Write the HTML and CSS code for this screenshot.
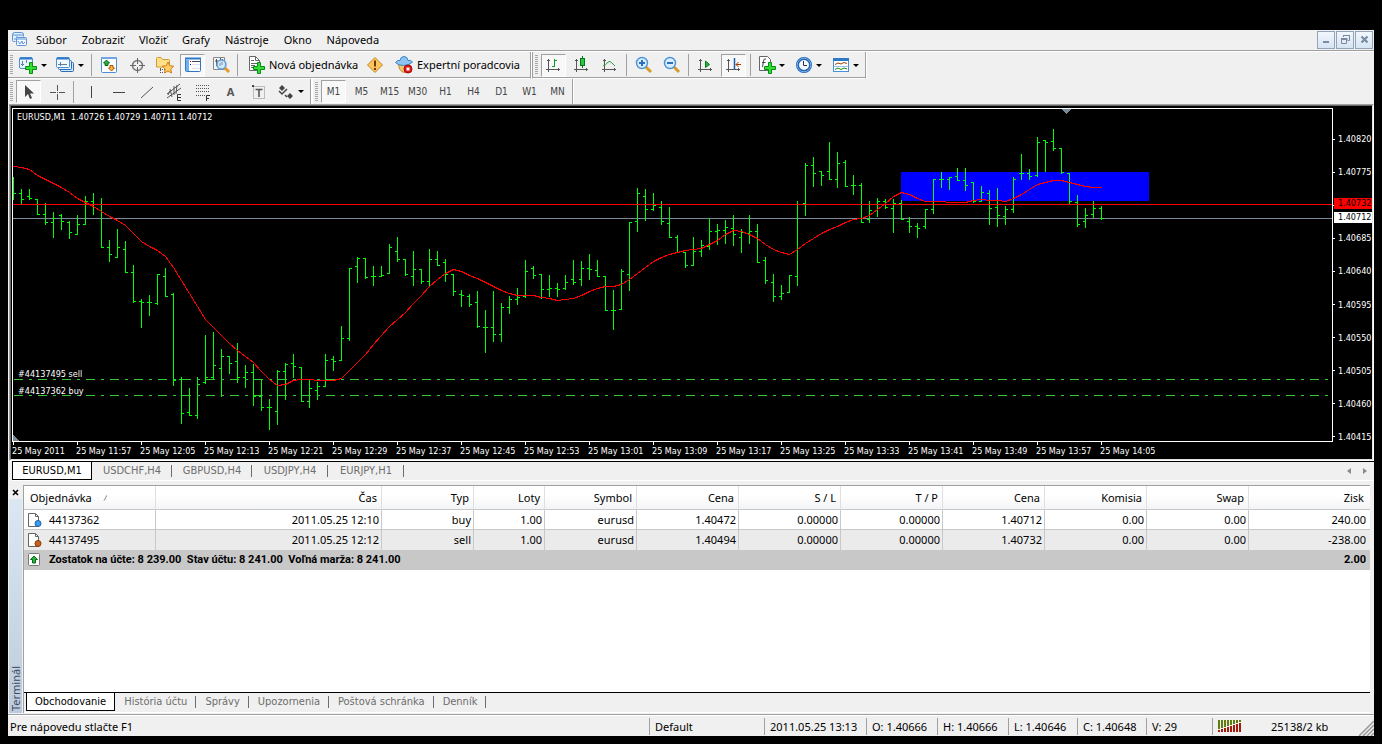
FILE: index.html
```html
<!DOCTYPE html>
<html lang="sk">
<head>
<meta charset="utf-8">
<title>EURUSD,M1</title>
<link rel="stylesheet" href="styles.css">
</head>
<body>
<div class="app">
  <header class="menubar">
    <svg class="app-icon" width="16" height="16" viewBox="0 0 16 16" fill="none" stroke="#5b93d6"><path d="M3.5 9.500h-2a1 1 0 0 1-1-1v-6a2 2 0 0 1 2-2h7a2 2 0 0 1 2 2v2" fill="#e4effb"/><path d="M1 3h10M3 6v2M5 4v3M7 5v1" /><rect x="4.500" y="5.500" width="10" height="8" rx="1" fill="#f4f9ff"/><path d="M5 7h9M6 9l2 3 2-3 1 3 2-2"/></svg>
    <nav class="menu">
      <button>Súbor</button><button>Zobraziť</button><button>Vložiť</button><button>Grafy</button><button>Nástroje</button><button>Okno</button><button>Nápoveda</button>
    </nav>
    <div class="window-buttons">
      <button aria-label="Minimalizovať"><svg width="15" height="15" viewBox="0 0 15 15"><path d="M4 9h6v2H4z" fill="#7a8ba0"/></svg></button>
      <button aria-label="Obnoviť"><svg width="15" height="15" viewBox="0 0 15 15" fill="none" stroke="#7a8ba0"><path d="M5 3.500h6.500M5.500 3v2M11.500 3v5.500H9.500"/><path d="M3 6.500h6.500M3 7.500h6.500M3.500 6v5.500h5V6"/></svg></button>
      <button aria-label="Zavrieť"><svg width="15" height="15" viewBox="0 0 15 15"><path d="M4.500 4.500l6 6M10.500 4.500l-6 6" stroke="#7a8ba0" stroke-width="2.200"/></svg></button>
    </div>
  </header>

  <div class="toolbar-row">
    <div class="toolbar">
      <span class="grip"></span>
      <button class="tool split" aria-label="Nový graf"><svg width="20" height="20" viewBox="0 0 20 20"><rect x="1.500" y="2.500" width="13" height="11" rx="1.500" fill="#eaf4ff" stroke="#4a8fd6"/><path d="M2 3.500h12" stroke="#2f7ac6" stroke-width="2"/><path d="M4.500 6v5M3 9.500h3M8.500 5v3" stroke="#5b7fa8"/><path d="M11.500 7.500h3v4h4v3h-4v4h-3v-4h-4v-3h4z" fill="#2fe02f" stroke="#0a8a1a"/></svg><span class="caret"></span></button>
      <button class="tool split" aria-label="Profily"><svg width="20" height="20" viewBox="0 0 20 20"><rect x="5.500" y="7.500" width="13" height="9" rx="1" fill="#d4e6f8" stroke="#2a6db5"/><rect x="3.500" y="5.500" width="13" height="9" rx="1" fill="#e4f0fb" stroke="#2a6db5"/><rect x="1.500" y="2.500" width="13" height="10" rx="1" fill="#f4f9ff" stroke="#4a8fd6"/><path d="M2 3.500h12" stroke="#2f7ac6" stroke-width="2"/><path d="M3 9.500h9M5.500 7v4" stroke="#5b7fa8"/></svg><span class="caret"></span></button>
      <span class="sep"></span>
      <button class="tool" aria-label="Trhový prehľad"><svg width="20" height="20" viewBox="0 0 20 20"><rect x="2.500" y="2.500" width="15" height="15" rx="1" fill="#fbfdff" stroke="#4a8fd6"/><path d="M2 3h16" stroke="#6fa8e0" stroke-width="2"/><path d="M7.500 5l3 3h-1.500v2.500h-3V8H4.500z" fill="#25b53c" stroke="#0a6b1a"/><path d="M12.500 16l-3-3H11v-2.500h3V13h1.500z" fill="#ffb44a" stroke="#b05a00"/></svg></button>
      <button class="tool" aria-label="Dátové okno"><svg width="20" height="20" viewBox="0 0 20 20" fill="none" stroke="#666"><circle cx="10.500" cy="10.500" r="5" stroke="#777" stroke-width="1.500"/><path d="M10.500 3v6M10.500 12v6M3 10.500h6M12 10.500h6"/></svg></button>
      <button class="tool" aria-label="Navigátor"><svg width="20" height="20" viewBox="0 0 20 20"><path d="M1.500 12V3.500q0-1 1-1H6l1.500 2h6q1 0 1 1V12z" fill="#ffe08a" stroke="#d19a2e"/><path d="M5.500 13v5M5 14.500h5M5 17.500h4" stroke="#555" stroke-dasharray="1 1"/><path d="M13 7l1.700 3.700 4 .5-2.900 2.800.7 4-3.500-2-3.500 2 .7-4-2.900-2.800 4-.5z" fill="#ffcf66" stroke="#cf7d1a"/></svg></button>
      <button class="tool pressed" aria-label="Terminál"><svg width="20" height="20" viewBox="0 0 20 20"><rect x="2.500" y="3.500" width="15" height="13" rx="1" fill="#fff" stroke="#2a78c8"/><path d="M2 3.500h16" stroke="#2a78c8" stroke-width="2"/><path d="M3 5h3v11H3z" fill="#6fb0f0"/><path d="M9 6.500h8" stroke="#445"/><path d="M9 9.500h8M9 13.500h8" stroke="#dde"/><path d="M7 6h1v1H7z" fill="#e00"/><path d="M7 9h1v1H7z" fill="#00c"/></svg></button>
      <button class="tool" aria-label="Tester stratégií"><svg width="20" height="20" viewBox="0 0 20 20"><path d="M2.500 2.500h11v12h-11z" fill="#f4f4f4" stroke="#888"/><path d="M5.500 4v7M4 6h3M9.500 3v4M11.500 4v3" stroke="#555"/><circle cx="10.500" cy="9.500" r="4.500" fill="#cfe6fa" stroke="#5f9fd8" stroke-width="1.500" fill-opacity=".85"/><path d="M9 11V8M11 10V7" stroke="#6b8dad"/><path d="M14 13l4 4" stroke="#e39a2b" stroke-width="3"/></svg></button>
      <span class="sep"></span>
      <button class="tool labelled order"><svg width="20" height="20" viewBox="0 0 20 20"><path d="M3.500 1.500h6l4 4v10h-10z" fill="#fff" stroke="#666"/><path d="M9.500 1.500v4h4M5 5.500h3M5 8.500h6M5 10.500h4M5 12.500h4" fill="none" stroke="#666"/><path d="M11.500 7.500h3v4h4v3h-4v4h-3v-4h-4v-3h4z" fill="#2fe02f" stroke="#0a8a1a"/></svg>Nová objednávka</button>
      <button class="tool" aria-label="MetaEditor"><svg width="20" height="20" viewBox="0 0 20 20"><path d="M10 2.500l7.500 7.500-7.500 7.500L2.500 10z" fill="#ffc45e" stroke="#c8842a" stroke-linejoin="round"/><path d="M10 5.500v6M10 13v2" stroke="#6a3c00" stroke-width="2"/></svg></button>
      <button class="tool labelled expert"><svg width="20" height="20" viewBox="0 0 20 20"><path d="M4.500 8q0 8 5.500 9.500 5.500-1.500 5.500-9.500z" fill="#f5c46a" stroke="#c8842a"/><path d="M1.500 7.500q2-3 4.500-2 .5-4 4-4t4 4q2.500-1 4.500 1.500-3.500 3.500-9 3.500T1.500 7.500z" fill="#8cc3f2" stroke="#3b83c4"/><circle cx="14" cy="14" r="4" fill="#e01818" stroke="#a40c0c"/><rect x="12.500" y="12.500" width="3" height="3" fill="#fff"/></svg>Expertní poradcovia</button>
    </div>
    <div class="toolbar second">
      <span class="grip"></span>
      <button class="tool pressed" aria-label="Stĺpcový graf"><svg width="20" height="20" viewBox="0 0 20 20"><path d="M4.500 17V4M3 5.500h3M2 14.500h14M14.500 13v3" stroke="#555" fill="none"/><path d="M10.500 4v8M8 11.500h3M11 5.500h2" stroke="#0a9a2a"/></svg></button>
      <button class="tool" aria-label="Sviečkový graf"><svg width="20" height="20" viewBox="0 0 20 20"><path d="M4.500 17V4M3 5.500h3M2 14.500h14M14.500 13v3" stroke="#555" fill="none"/><path d="M10.500 1v12" stroke="#067a1a"/><rect x="8.500" y="3.500" width="4" height="7" fill="#29c840" stroke="#067a1a"/></svg></button>
      <button class="tool" aria-label="Čiarový graf"><svg width="20" height="20" viewBox="0 0 20 20"><path d="M4.500 17V4M3 5.500h3M2 14.500h14M14.500 13v3" stroke="#555" fill="none"/><path d="M3 11q3-1 5-4 2-1.500 4 1l3 3" stroke="#28a544" fill="none"/></svg></button>
      <span class="sep"></span>
      <button class="tool" aria-label="Priblížiť"><svg width="20" height="20" viewBox="0 0 20 20"><path d="M12 12l5 5" stroke="#d89a2b" stroke-width="3"/><circle cx="8" cy="8" r="5.500" fill="#d8edff" stroke="#4a92d4" stroke-width="1.400"/><path d="M5 8h6M8 5v6" stroke="#2a6fb8" stroke-width="2"/></svg></button>
      <button class="tool" aria-label="Oddialiť"><svg width="20" height="20" viewBox="0 0 20 20"><path d="M12 12l5 5" stroke="#d89a2b" stroke-width="3"/><circle cx="8" cy="8" r="5.500" fill="#d8edff" stroke="#4a92d4" stroke-width="1.400"/><path d="M5 8h6" stroke="#2a6fb8" stroke-width="2"/></svg></button>
      <span class="sep"></span>
      <button class="tool" aria-label="Automatický posun"><svg width="20" height="20" viewBox="0 0 20 20"><path d="M4.500 17V4M3 5.500h3M2 14.500h14M14.500 13v3" stroke="#555" fill="none"/><path d="M9.500 6l4 3.500-4 3z" fill="#25b53c" stroke="#067a1a"/></svg></button>
      <button class="tool pressed" aria-label="Posun grafu"><svg width="20" height="20" viewBox="0 0 20 20"><path d="M4.500 17V4M3 5.500h3M2 14.500h14M14.500 13v3" stroke="#555" fill="none"/><path d="M10.500 3v11" stroke="#1c5fae" stroke-width="1.500"/><path d="M17 9.500h-5M14.500 7l-2.500 2.500 2.500 2.500" stroke="#a04000" fill="none"/></svg></button>
      <span class="sep"></span>
      <button class="tool split" aria-label="Indikátory"><svg width="20" height="20" viewBox="0 0 20 20"><path d="M2.500 1.500h8l3 3v11h-11z" fill="#fff" stroke="#666"/><path d="M9 4q-2-1-2.500 2L5.500 12M5 7.500h3.500" stroke="#444" fill="none"/><path d="M11.500 7.500h3v4h4v3h-4v4h-3v-4h-4v-3h4z" fill="#2fe02f" stroke="#0a8a1a"/></svg><span class="caret"></span></button>
      <button class="tool split" aria-label="Periódy"><svg width="20" height="20" viewBox="0 0 20 20"><circle cx="10" cy="10" r="6.500" fill="#f4f9ff" stroke="#1f62b4" stroke-width="3"/><circle cx="10" cy="10" r="6.800" fill="none" stroke="#7db5ec"/><path d="M9.500 6v4.500H13" stroke="#333" fill="none"/></svg><span class="caret"></span></button>
      <button class="tool split" aria-label="Šablóny"><svg width="20" height="20" viewBox="0 0 20 20"><rect x="2.500" y="3.500" width="15" height="13" fill="#fff" stroke="#4a8fd6"/><path d="M2 4.500h16" stroke="#2f7ac6" stroke-width="3"/><path d="M4 9.500l3-1.500 3 1 3-1.500 3 1" stroke="#a04000" fill="none"/><path d="M3 11.500h14" stroke="#9bc1e6"/><path d="M4 14.500l3-1.500 3 1.500 3-1.500 3 1" stroke="#0a8a1a" fill="none"/></svg><span class="caret"></span></button>
    </div>
  </div>

  <div class="toolbar-row lower">
    <div class="toolbar">
      <span class="grip"></span>
      <button class="tool pressed" aria-label="Kurzor"><svg width="20" height="20" viewBox="0 0 20 20"><path d="M6 3v12l3-3 2 5 2-1-2-4.500h4z" fill="#444"/></svg></button>
      <button class="tool" aria-label="Zameriavací kríž"><svg width="20" height="20" viewBox="0 0 20 20"><path d="M10.500 3v6M10.500 12v6M3 10.500h6M12 10.500h6M10 10.500h1" stroke="#555"/></svg></button>
      <span class="sep"></span>
      <button class="tool" aria-label="Vertikálna čiara"><svg width="20" height="20" viewBox="0 0 20 20"><path d="M10.500 4v12" stroke="#444"/></svg></button>
      <button class="tool" aria-label="Horizontálna čiara"><svg width="20" height="20" viewBox="0 0 20 20"><path d="M4 10.500h12" stroke="#444"/></svg></button>
      <button class="tool" aria-label="Trendová čiara"><svg width="20" height="20" viewBox="0 0 20 20"><path d="M4 16L16 5" stroke="#555"/></svg></button>
      <button class="tool" aria-label="Ekvidištančný kanál"><svg width="20" height="20" viewBox="0 0 20 20" fill="none" stroke="#555"><path d="M2 12L15 2M2 16L16 6M5 7l2 8M9 4v9M12 3l-1 9M3 13l2-4" /><path d="M16 12.500h-3.500v6H16M13 15.500h3" stroke="#333"/></svg></button>
      <button class="tool" aria-label="Fibonacci"><svg width="20" height="20" viewBox="0 0 20 20" fill="none" stroke="#555"><path d="M3 3.500h14M3 6.500h14M3 9.500h14M3 13.500h9" stroke-dasharray="1 1"/><path d="M17 13.500h-3.500V19M13 16.500h3" stroke="#333"/></svg></button>
      <button class="tool glyph" aria-label="Text">A</button>
      <button class="tool" aria-label="Textová značka"><svg width="20" height="20" viewBox="0 0 20 20" fill="none"><rect x="4.500" y="4.500" width="11" height="12" stroke="#888" stroke-dasharray="1 1"/><path d="M3 3h2v2H3z" fill="#444"/><path d="M6.500 7.500h7M10 7v8" stroke="#555" stroke-width="1.600"/></svg></button>
      <button class="tool split" aria-label="Šípky"><svg width="20" height="20" viewBox="0 0 20 20"><path d="M6 3l3 3-1.500 1.500L6 9 3 6zM14 11l3 3-3 3-3-3z" fill="#444"/><path d="M3 9l3 3 5-5M9 13l2 2" stroke="#444" fill="none" stroke-width="1.500"/></svg><span class="caret"></span></button>
    </div>
    <div class="toolbar periods">
      <span class="grip"></span>
      <button class="tool pressed">M1</button><button class="tool">M5</button><button class="tool">M15</button><button class="tool">M30</button><button class="tool">H1</button><button class="tool">H4</button><button class="tool">D1</button><button class="tool">W1</button><button class="tool">MN</button>
    </div>
  </div>

  <section class="chart-window">
    <div class="chart">
      <div class="plot">
        <svg id="plot" width="100%" height="100%" viewBox="13 109 1319 332" preserveAspectRatio="none" shape-rendering="crispEdges"></svg>
        <div class="chart-title">EURUSD,M1&nbsp; 1.40726 1.40729 1.40711 1.40712</div>
        <div class="order-label sell">#44137495 sell</div>
        <div class="order-label buy">#44137362 buy</div>
      </div>
      <div class="price-axis">
        <span>1.40820</span><span>1.40775</span><span></span><span>1.40685</span><span>1.40640</span><span>1.40595</span><span>1.40550</span><span>1.40505</span><span>1.40460</span><span>1.40415</span>
        <b class="tag ask">1.40732</b>
        <b class="tag bid">1.40712</b>
      </div>
      <div class="time-axis">
        <span>25 May 2011</span><span>25 May 11:57</span><span>25 May 12:05</span><span>25 May 12:13</span><span>25 May 12:21</span><span>25 May 12:29</span><span>25 May 12:37</span><span>25 May 12:45</span><span>25 May 12:53</span><span>25 May 13:01</span><span>25 May 13:09</span><span>25 May 13:17</span><span>25 May 13:25</span><span>25 May 13:33</span><span>25 May 13:41</span><span>25 May 13:49</span><span>25 May 13:57</span><span>25 May 14:05</span>
      </div>
    </div>
  </section>

  <nav class="tabs chart-tabs">
    <button class="active">EURUSD,M1</button><button>USDCHF,H4</button><button>GBPUSD,H4</button><button>USDJPY,H4</button><button>EURJPY,H1</button>
    <div class="tab-arrows">
      <button aria-label="Späť"><svg width="6" height="8" viewBox="0 0 6 8"><path d="M5 1v6L1 4z" fill="#888"/></svg></button>
      <button aria-label="Ďalej"><svg width="6" height="8" viewBox="0 0 6 8"><path d="M1 1v6l4-3z" fill="#888"/></svg></button>
    </div>
  </nav>

  <section class="terminal">
    <aside class="terminal-side">
      <button class="close" aria-label="Zavrieť terminál"><svg width="7" height="7" viewBox="0 0 7 7"><path d="M1 1l5 5M6 1L1 6" stroke="#000" stroke-width="1.600"/></svg></button>
      <div class="terminal-name"><span>Terminál</span></div>
    </aside>
    <div class="terminal-main">
      <div class="table-area">
        <table>
          <colgroup><col class="c-order"><col class="c-time"><col class="c-type"><col class="c-lots"><col class="c-type"><col class="c-num"><col class="c-num"><col class="c-num"><col class="c-num"><col class="c-num"><col class="c-num"><col></colgroup>
          <thead><tr><th>Objednávka <svg class="sort" width="8" height="8" viewBox="0 0 8 8"><path d="M1 7l3-6" stroke="#888"/><path d="M4 1l3 6H1" stroke="#fff" fill="none"/></svg></th><th>Čas</th><th>Typ</th><th>Loty</th><th>Symbol</th><th>Cena</th><th>S / L</th><th>T / P</th><th>Cena</th><th>Komisia</th><th>Swap</th><th>Zisk</th></tr></thead>
          <tbody>
            <tr><td><span class="order-cell"><svg width="16" height="16" viewBox="0 0 16 16"><path d="M1.500 1.500h7l3 3v10h-10z" fill="#fff" stroke="#666"/><path d="M8.500 1.500v3h3" fill="none" stroke="#666"/><circle cx="11" cy="11.500" r="3" fill="#3d9bee" stroke="#1a5fa8"/></svg>44137362</span></td><td>2011.05.25 12:10</td><td>buy</td><td>1.00</td><td>eurusd</td><td>1.40472</td><td>0.00000</td><td>0.00000</td><td>1.40712</td><td>0.00</td><td>0.00</td><td>240.00</td></tr>
            <tr><td><span class="order-cell"><svg width="16" height="16" viewBox="0 0 16 16"><path d="M1.500 1.500h7l3 3v10h-10z" fill="#fff" stroke="#666"/><path d="M8.500 1.500v3h3" fill="none" stroke="#666"/><circle cx="11" cy="11.500" r="3" fill="#c8641a" stroke="#84380a"/></svg>44137495</span></td><td>2011.05.25 12:12</td><td>sell</td><td>1.00</td><td>eurusd</td><td>1.40494</td><td>0.00000</td><td>0.00000</td><td>1.40732</td><td>0.00</td><td>0.00</td><td>-238.00</td></tr>
            <tr class="summary"><td colspan="11"><span class="order-cell"><svg width="16" height="16" viewBox="0 0 16 16"><rect x="1.500" y="1.500" width="11" height="12" rx="1" fill="#fff" stroke="#777"/><path d="M7 4l3.500 3.500h-2V11h-3V7.500h-2z" fill="#25b53c" stroke="#0a6b1a"/></svg>Zostatok na účte: 8 239.00&nbsp; Stav účtu: 8 241.00&nbsp; Voľná marža: 8 241.00</span></td><td>2.00</td></tr>
          </tbody>
        </table>
      </div>
      <nav class="tabs terminal-tabs">
        <button class="active">Obchodovanie</button><button>História účtu</button><button>Správy</button><button>Upozornenia</button><button>Poštová schránka</button><button>Denník</button>
      </nav>
    </div>
  </section>

  <footer class="status">
    <span class="help">Pre nápovedu stlačte F1</span><span class="profile">Default</span><span class="date">2011.05.25 13:13</span><span class="ohl">O: 1.40666</span><span class="ohl">H: 1.40666</span><span class="lc">L: 1.40646</span><span class="lc">C: 1.40648</span><span class="vol">V: 29</span>
    <span class="net"><svg width="23" height="13" viewBox="0 0 23 13" shape-rendering="crispEdges"><path d="M0 0h2v9h-2zM3 0h2v8h-2zM6 0h2v7h-2zM9 0h2v6h-2zM12 0h2v5h-2zM15 0h2v4h-2zM18 0h2v3h-2zM21 0h2v2h-2z" fill="#5e7f10"/><path d="M0 10h2v2h-2zM3 9h2v3h-2zM6 8h2v4h-2zM9 7h2v5h-2zM12 6h2v6h-2zM15 5h2v7h-2zM18 4h2v8h-2zM21 3h2v9h-2z" fill="#a41a0c"/></svg>25138/2 kb</span>
    <svg class="resize" width="16" height="16" viewBox="0 0 16 16"><path d="M1 16L16 1M5 16L16 5M9 16l7-7M13 16l3-3" stroke="#999" stroke-width="1.500"/></svg>
  </footer>
</div>
<script src="script.js"></script>
</body>
</html>
```
FILE: styles.css
```css
* { box-sizing: border-box; }

body {
  margin: 0;
  height: 100vh;
  padding: 30px 8px 8px;
  background: #000;
  color: #000;
  font: 11px/14px "Noto Sans", "Open Sans", sans-serif;
}

button {
  margin: 0;
  padding: 0;
  border: 0;
  background: none;
  color: inherit;
  font: inherit;
  white-space: nowrap;
}

svg { display: block; flex: none; }

.app {
  height: 100%;
  display: flex;
  flex-direction: column;
  background: #f0f0f0;
  overflow: hidden;
}

.menubar {
  display: flex;
  align-items: center;
  height: 22px;
  flex: none;
  padding: 0 0 2px 4px;
  border-bottom: 1px solid #fff;
  box-shadow: inset 0 -1px #a0a0a0;
}
.menu { display: flex; flex: 1; gap: 15px; padding-left: 8px; }
.window-buttons { display: flex; gap: 1px; padding-right: 1px; }
.window-buttons button {
  width: 18px;
  height: 18px;
  display: grid;
  place-items: center;
  border: 1px solid #93a3b8;
  background: linear-gradient(#f2f7fd, #d5e4f4);
}

.toolbar-row { display: flex; height: 27px; flex: none; }
.toolbar-row.lower { height: 25px; }
.toolbar {
  display: flex;
  align-items: center;
  gap: 3px;
  padding: 0 2px;
  border-right: 1px solid #a0a0a0;
  border-bottom: 1px solid #fff;
  box-shadow: inset 0 -1px #a0a0a0, 1px 0 #fff;
}
.lower .toolbar { border-bottom: 0; box-shadow: 1px 0 #fff; }
.second, .periods { margin-left: 1px; border-left: 1px solid #a0a0a0; }
.lower .periods { border-left-color: #fff; }
.grip {
  width: 3px;
  height: 20px;
  background: repeating-linear-gradient(#a8a8a8 0 1px, #f0f0f0 1px 2px);
}
.sep { width: 1px; height: 22px; margin: 0 1px; background: #a0a0a0; }
.tool {
  width: 25px;
  height: 23px;
  display: flex;
  align-items: center;
  justify-content: center;
  border: 1px solid transparent;
}
.tool.pressed {
  border-color: #a0a0a0 #fff #fff #a0a0a0;
  background: #f8f8f8;
}
.tool.split { width: 34px; justify-content: flex-start; gap: 3px; padding-left: 1px; }
.second .split, .lower .split { gap: 2px; }
.caret {
  border: 3px solid transparent;
  border-top-color: #000;
  border-bottom: 0;
}
.tool.labelled { justify-content: flex-start; gap: 3px; padding-left: 3px; }
.tool.order { width: 117px; }
.tool.expert { width: 138px; }
.tool.glyph { color: #555; font-weight: bold; }
.periods .tool { color: #444; font: 10px/12px "DejaVu Sans Condensed", "Noto Sans", sans-serif; }

.chart-window {
  flex: 355 1 0;
  min-height: 0;
  margin-left: 1px;
  border: 1px solid;
  border-color: #a0a0a0 #fff #fff #a0a0a0;
}
.chart {
  height: 100%;
  display: grid;
  grid-template-columns: minmax(0, 1fr) 39px;
  grid-template-rows: minmax(0, 1fr) 17px;
  padding: 2px 0 0 1px;
  border: 1px solid;
  border-color: #696969 #e3e3e3 #e3e3e3 #696969;
  background: #000;
  color: #fff;
  font: 9px/12px "DejaVu Sans Condensed", "Noto Sans", sans-serif;
  white-space: nowrap;
}
.plot { position: relative; border: 1px solid #fff; }
.chart-title { position: absolute; left: 4px; top: 2px; }
.order-label { position: absolute; left: 5px; }
.order-label.sell { top: 78%; }
.order-label.buy { top: 83%; }

.price-axis {
  position: relative;
  grid-column: 2;
  grid-row: 1 / 3;
  display: flex;
  flex-direction: column;
  justify-content: space-between;
  padding: 25px 0 16px;
}
.price-axis span { display: flex; align-items: center; gap: 3px; height: 12px; }
.price-axis span::before { content: ""; width: 2px; height: 1px; background: #fff; }
.tag {
  position: absolute;
  left: 1px;
  right: 0;
  padding-left: 4px;
  font-weight: normal;
  line-height: 11px;
  color: #000;
}
.tag.ask { top: 25.7%; background: #f00; }
.tag.bid { top: 29.7%; background: #fff; }

.time-axis { display: grid; grid-template-columns: repeat(18, 64px); overflow: hidden; }
.time-axis span { position: relative; padding-top: 3px; }
.time-axis span::before {
  content: "";
  position: absolute;
  left: 1px;
  top: 0;
  width: 1px;
  height: 3px;
  background: #fff;
}

.tabs {
  display: flex;
  flex: none;
  height: 20px;
  border-top: 1px solid #000;
  color: #6d6d6d;
  font-family: "DejaVu Sans Condensed", "Noto Sans", sans-serif;
}
.tabs > button {
  position: relative;
  height: 17px;
  padding: 0 8px;
  border: 1px solid transparent;
  border-width: 0 1px;
}
.tabs > button:not(.active)::after {
  content: "";
  position: absolute;
  right: -1px;
  top: 3px;
  width: 1px;
  height: 12px;
  background: #6d6d6d;
}
.tabs > .active {
  height: 18px;
  background: #fff;
  border: 1px solid #000;
  border-top: 0;
  color: #000;
}
.chart-tabs { margin-left: 4px; border-bottom: 1px solid #fff; }
.chart-tabs > button { width: 76px; padding: 0; }
.chart-tabs > .active,
.chart-tabs > button:nth-child(2),
.chart-tabs > button:nth-child(3) { width: 80px; }
.tab-arrows { display: flex; gap: 10px; margin-left: auto; padding-right: 6px; align-items: center; }

.terminal { display: flex; flex: 228 1 0; min-height: 0; padding: 4px 4px 0 1px; }
.terminal-side { display: flex; flex-direction: column; width: 14px; }
.close { height: 14px; display: grid; place-items: center; padding-right: 2px; }
.terminal-name {
  flex: 1;
  margin-right: 1px;
  display: flex;
  align-items: flex-end;
  background: linear-gradient(#dbe7f3, #bccbdc);
  color: #3c4a5c;
}
.terminal-name span { writing-mode: vertical-rl; transform: rotate(180deg); padding-top: 2px; }
.terminal-main {
  flex: 1;
  min-width: 0;
  display: flex;
  flex-direction: column;
  border: 1px solid #a0a0a0;
  border-width: 1px 0 0 1px;
}
.table-area { flex: 1; min-height: 0; background: #fff; }
table { width: 100%; table-layout: fixed; border-collapse: separate; border-spacing: 0; }
.c-order { width: 132px; }
.c-time { width: 226px; }
.c-type { width: 92px; }
.c-lots { width: 71px; }
.c-num { width: 102px; }
th {
  height: 24px;
  padding: 0 4px 0 6px;
  font-weight: normal;
  text-align: right;
  border-right: 1px solid #dedfe1;
  border-bottom: 1px solid #c8c8c8;
  background: linear-gradient(#fff 40%, #f3f4f6);
}
th:first-child { text-align: left; }
.sort { display: inline-block; margin-left: 8px; }
td {
  height: 20px;
  padding: 0 2px 0 3px;
  text-align: right;
  white-space: nowrap;
  border-right: 1px solid #c8c8c8;
}
td:first-child { text-align: left; }
td:last-child { padding-right: 4px; border-right: 0; }
th:last-child { padding-right: 6px; border-right: 0; }
tbody tr:nth-child(1) td { border-bottom: 1px solid #c8c8c8; }
tbody tr:nth-child(2) td { background: #ebebeb; }
tbody tr.summary td { background: #c8c8c8; font-family: Roboto, "Noto Sans", sans-serif; font-weight: bold; }
.order-cell { display: flex; align-items: center; gap: 6px; }

.terminal-tabs { height: 21px; padding-left: 2px; border-bottom: 1px solid #fff; }

.status {
  flex: none;
  display: flex;
  align-items: center;
  height: 22px;
  margin-top: 1px;
  padding: 1px 0 0 2px;
  border-top: 1px solid #a0a0a0;
  box-shadow: inset 0 1px #fff;
}
.status span {
  height: 17px;
  line-height: 17px;
  white-space: nowrap;
  border-left: 1px solid #a0a0a0;
  padding-left: 5px;
}
.status .help { flex: 1; border: 0; padding: 0; }
.status .profile { width: 115px; }
.status .date { width: 102px; }
.status .ohl { width: 71px; }
.status .lc { width: 69px; }
.status .vol { width: 66px; }
.status .net { display: flex; align-items: center; gap: 30px; width: 146px; }
.resize { align-self: flex-end; }
```
FILE: script.js
```js
// One entry per minute bar: high, low, open, close.
const bars = [
  [177,200,193,193],[189,204,193,199],[189,200,196,198],[199,214,199,214],[203,225,214,222],[212,238,222,218],[214,230,215,221],[221,239,222,232],
  [215,235,234,224],[196,225,224,201],[193,215,201,204],[198,247,204,247],[240,262,247,254],[229,258,257,247],[241,272,249,272],[265,303,272,301],
  [299,328,301,302],[295,316,302,302],[274,305,303,274],[268,296,276,296],[293,386,294,380],[377,424,379,413],[388,416,412,415],[377,419,415,384],
  [335,384,382,377],[332,379,377,365],[349,397,368,356],[356,374,356,363],[343,383,361,377],[365,388,377,372],[364,406,372,396],[379,411,396,407],
  [399,430,407,407],[370,425,411,371],[363,400,371,364],[354,378,363,366],[367,402,367,401],[379,408,401,388],[382,400,390,386],[354,387,386,360],
  [356,371,359,361],[326,361,360,338],[268,341,338,268],[257,283,266,258],[258,279,258,277],[266,286,276,276],[266,277,276,275],[244,274,273,247],
  [237,262,251,259],[259,276,259,274],[251,286,276,269],[269,284,269,281],[249,286,281,259],[251,266,259,265],[259,282,262,274],[274,296,274,291],
  [290,307,294,295],[294,307,296,304],[291,328,302,326],[310,353,327,327],[291,342,327,334],[303,342,334,307],[296,314,307,299],[288,305,299,297],
  [260,298,296,271],[266,279,268,275],[274,299,274,289],[275,297,289,288],[283,297,288,289],[275,290,288,282],[260,285,279,282],[261,286,279,268],
  [254,280,268,269],[260,277,270,276],[276,311,276,310],[290,330,310,310],[269,310,309,271],[222,291,274,222],[188,232,221,193],[189,221,196,209],
  [193,211,209,205],[201,225,207,221],[207,238,223,237],[235,253,237,252],[252,268,252,265],[237,266,265,251],[240,257,251,245],[218,250,246,231],
  [224,245,231,230],[220,244,230,227],[215,246,228,234],[229,253,237,232],[215,244,233,231],[224,263,231,262],[257,284,260,280],[274,302,282,296],
  [285,300,296,293],[275,292,292,275],[201,286,276,204],[163,216,203,165],[157,187,165,173],[171,186,171,175],[142,180,171,179],[152,188,179,163],
  [160,187,162,186],[175,195,185,185],[183,223,185,222],[201,223,219,210],[198,217,210,201],[199,209,201,207],[199,233,208,203],[200,220,203,219],
  [217,233,221,226],[223,238,226,228],[209,229,226,209],[179,214,209,179],[172,188,179,179],[177,190,179,177],[168,181,176,180],[168,191,180,185],
  [182,203,182,201],[186,202,201,192],[190,225,193,208],[188,227,207,215],[206,225,216,209],[177,213,209,179],[154,180,173,173],[169,180,173,176],
  [137,177,175,142],[140,172,140,142],[129,151,141,148],[148,174,148,172],[173,204,173,201],[195,227,202,224],[208,228,221,215],[201,218,214,208],
  [206,220,208,218]
];

// Moving average, one value per bar.
const average = [
  166,167,169,175,179,183,187,192,198,202,206,211,216,220,225,233,241,246,250,256,267,280,293,306,319,327,335,343,350,356,362,371,379,385,384,380,
  379,379,380,380,380,378,370,362,354,344,335,326,319,312,303,295,286,279,273,269,271,275,278,282,286,290,293,295,295,295,297,298,300,299,298,295,
  291,288,286,286,284,279,273,267,261,257,254,252,250,249,248,244,240,234,230,231,234,238,244,249,252,254,249,243,238,233,229,226,222,219,218,215,
  209,203,196,192,194,198,201,201,201,202,202,202,200,199,200,200,201,198,194,189,184,182,180,180,182,184,186,187,187
];

const step = 8;
const left = 13;
const x = i => left + i * step;

const candles = bars.map(([high, low, open, close], i) =>
  `M${x(i)} ${high}h1V${Math.max(low, open + 1, close + 1)}h-1z` +
  `M${x(i) - 2} ${open}h2v1h-2z` +
  `M${x(i) + 1} ${close}h2v1h-2z`
).join("");

const line = average.map((y, i) => `${x(i) + 0.5},${y + 0.5}`).join(" ");

document.getElementById("plot").innerHTML = `
  <rect x="901" y="172" width="248" height="29" fill="#00f"/>
  <rect x="13" y="218" width="1319" height="1" fill="#778899"/>
  <path d="${candles}" fill="#0f0"/>
  <path d="M14 379.5H1329M14 395.5H1329" stroke="#32cd32" stroke-dasharray="9 6 3 6"/>
  <rect x="13" y="204" width="1319" height="1" fill="#f00"/>
  <polyline points="${line}" fill="none" stroke="#f00"/>
  <path d="M1062 109h9l-4.500 5zM13 435v6h6z" fill="#778899"/>`;
```
